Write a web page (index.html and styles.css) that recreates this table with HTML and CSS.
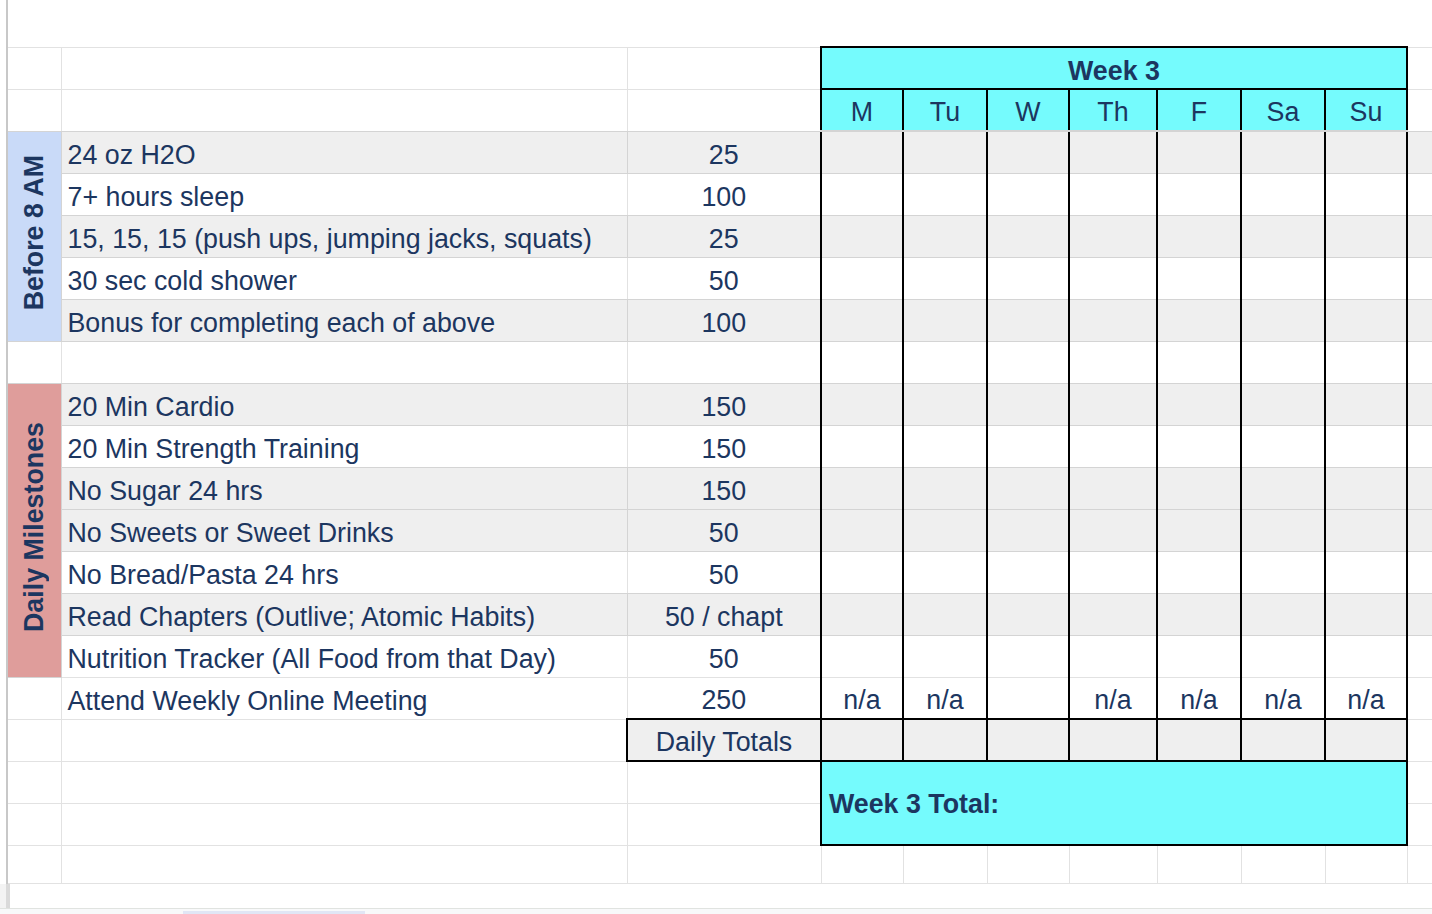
FILE: index.html
```html
<!DOCTYPE html>
<html lang="en">
<head>
<meta charset="utf-8">
<title>Week 3 Tracker</title>
<link rel="stylesheet" href="styles.css">
</head>
<body>
<div class="sheet">
  <div class="top-gap"></div>
  <table class="grid">
    <colgroup>
      <col class="c-a"><col class="c-b"><col class="c-c">
      <col class="c-d"><col class="c-e"><col class="c-f"><col class="c-g"><col class="c-h"><col class="c-i"><col class="c-j">
      <col class="c-k">
    </colgroup>
    <tbody>
      <tr><td></td><td></td><td></td><td class="wk" colspan="7">Week 3</td><td></td></tr>
      <tr><td></td><td></td><td></td>
        <td class="day">M</td><td class="day">Tu</td><td class="day">W</td><td class="day">Th</td><td class="day">F</td><td class="day">Sa</td><td class="day">Su</td><td></td></tr>
      <tr class="band"><td class="lbl lbl-blue" rowspan="5"><span>Before 8 AM</span></td><td class="task">24 oz H2O</td><td class="pts">25</td>
        <td class="wd"></td><td class="wd"></td><td class="wd"></td><td class="wd"></td><td class="wd"></td><td class="wd"></td><td class="wd"></td><td></td></tr>
      <tr><td class="task">7+ hours sleep</td><td class="pts">100</td>
        <td class="wd"></td><td class="wd"></td><td class="wd"></td><td class="wd"></td><td class="wd"></td><td class="wd"></td><td class="wd"></td><td></td></tr>
      <tr class="band"><td class="task">15, 15, 15 (push ups, jumping jacks, squats)</td><td class="pts">25</td>
        <td class="wd"></td><td class="wd"></td><td class="wd"></td><td class="wd"></td><td class="wd"></td><td class="wd"></td><td class="wd"></td><td></td></tr>
      <tr><td class="task">30 sec cold shower</td><td class="pts">50</td>
        <td class="wd"></td><td class="wd"></td><td class="wd"></td><td class="wd"></td><td class="wd"></td><td class="wd"></td><td class="wd"></td><td></td></tr>
      <tr class="band"><td class="task">Bonus for completing each of above</td><td class="pts">100</td>
        <td class="wd"></td><td class="wd"></td><td class="wd"></td><td class="wd"></td><td class="wd"></td><td class="wd"></td><td class="wd"></td><td></td></tr>
      <tr><td></td><td></td><td></td>
        <td class="wd"></td><td class="wd"></td><td class="wd"></td><td class="wd"></td><td class="wd"></td><td class="wd"></td><td class="wd"></td><td></td></tr>
      <tr class="band"><td class="lbl lbl-red" rowspan="7"><span>Daily Milestones</span></td><td class="task">20 Min Cardio</td><td class="pts">150</td>
        <td class="wd"></td><td class="wd"></td><td class="wd"></td><td class="wd"></td><td class="wd"></td><td class="wd"></td><td class="wd"></td><td></td></tr>
      <tr><td class="task">20 Min Strength Training</td><td class="pts">150</td>
        <td class="wd"></td><td class="wd"></td><td class="wd"></td><td class="wd"></td><td class="wd"></td><td class="wd"></td><td class="wd"></td><td></td></tr>
      <tr class="band"><td class="task">No Sugar 24 hrs</td><td class="pts">150</td>
        <td class="wd"></td><td class="wd"></td><td class="wd"></td><td class="wd"></td><td class="wd"></td><td class="wd"></td><td class="wd"></td><td></td></tr>
      <tr class="band"><td class="task">No Sweets or Sweet Drinks</td><td class="pts">50</td>
        <td class="wd"></td><td class="wd"></td><td class="wd"></td><td class="wd"></td><td class="wd"></td><td class="wd"></td><td class="wd"></td><td></td></tr>
      <tr><td class="task">No Bread/Pasta 24 hrs</td><td class="pts">50</td>
        <td class="wd"></td><td class="wd"></td><td class="wd"></td><td class="wd"></td><td class="wd"></td><td class="wd"></td><td class="wd"></td><td></td></tr>
      <tr class="band"><td class="task">Read Chapters (Outlive; Atomic Habits)</td><td class="pts">50 / chapt</td>
        <td class="wd"></td><td class="wd"></td><td class="wd"></td><td class="wd"></td><td class="wd"></td><td class="wd"></td><td class="wd"></td><td></td></tr>
      <tr><td class="task">Nutrition Tracker (All Food from that Day)</td><td class="pts">50</td>
        <td class="wd"></td><td class="wd"></td><td class="wd"></td><td class="wd"></td><td class="wd"></td><td class="wd"></td><td class="wd"></td><td></td></tr>
      <tr><td></td><td class="task">Attend Weekly Online Meeting</td><td class="pts">250</td>
        <td class="wd">n/a</td><td class="wd">n/a</td><td class="wd"></td><td class="wd">n/a</td><td class="wd">n/a</td><td class="wd">n/a</td><td class="wd">n/a</td><td></td></tr>
      <tr><td></td><td></td><td class="tot">Daily Totals</td>
        <td class="tot"></td><td class="tot"></td><td class="tot"></td><td class="tot"></td><td class="tot"></td><td class="tot"></td><td class="tot"></td><td></td></tr>
      <tr><td></td><td></td><td></td><td class="total-box" colspan="7" rowspan="2">Week 3 Total:</td><td></td></tr>
      <tr><td></td><td></td><td></td><td></td></tr>
      <tr class="last"><td></td><td></td><td></td><td></td><td></td><td></td><td></td><td></td><td></td><td></td><td></td></tr>
    </tbody>
  </table>
</div>
<div class="foot"><div class="foot-edge"></div></div>
<div class="hbar"><div class="thumb"></div></div>
</body>
</html>
```
FILE: styles.css
```css
* { box-sizing: border-box; }
html, body {
  margin: 0;
  padding: 0;
  background: #ffffff;
  overflow: hidden;
}
body {
  width: 1432px;
  height: 914px;
  font-family: "Liberation Sans", Arial, sans-serif;
  color: #1c3660;
}
.sheet {
  margin-left: 6px;
  border-left: 2px solid #c8c8c8;
}
.top-gap { height: 46px; }

.grid {
  border-collapse: collapse;
  table-layout: fixed;
  width: 1424px;
  border-left: hidden;
  border-right: hidden;
  font-size: 26.8px;
}
.c-a { width: 53px; }
.c-b { width: 566px; }
.c-c { width: 194px; }
.c-d { width: 82px; }
.c-e { width: 84px; }
.c-f { width: 82px; }
.c-g { width: 88px; }
.c-h { width: 84px; }
.c-i { width: 84px; }
.c-j { width: 82px; }
.c-k { width: 25px; }

.grid tr { height: 42px; }
.grid tr.last { height: 38px; }
.grid td {
  border: 1px solid #e2e2e2;
  padding: 0 6px 3px;
  line-height: 30px;
  vertical-align: bottom;
  white-space: nowrap;
  overflow: hidden;
}
.grid .band > td { background: #efefef; border-color: #d4d4d4; }
.grid tr:has(+ tr.band) > td { border-bottom-color: #d4d4d4; }

.grid td.pts { text-align: center; padding: 0 2px 3px; }
.grid td.wd {
  text-align: center;
  padding: 0 2px 3px;
  border-left: 2px solid #000;
  border-right: 2px solid #000;
}
.grid td.wk {
  background: #75fbfd;
  border: 2px solid #000;
  text-align: center;
  font-weight: bold;
  padding-bottom: 2px;
}
.grid td.day {
  background: #75fbfd;
  border: 2px solid #000;
  text-align: center;
  padding: 0 2px 3px;
}
.grid td.tot {
  background: #efefef;
  border: 2px solid #000;
  text-align: center;
  padding: 0 2px 3px;
}
.grid td.total-box {
  background: #75fbfd;
  border: 2px solid #000;
  font-weight: bold;
  vertical-align: middle;
  padding: 2px 7px 0;
}
.grid td.lbl {
  padding: 0;
  text-align: center;
  vertical-align: middle;
  font-weight: bold;
}
.grid td.lbl-blue { background: #c9daf8; }
.grid td.lbl-red { background: #df9d9b; }
.lbl span {
  display: inline-block;
  writing-mode: vertical-rl;
  transform: rotate(180deg);
  line-height: 30px;
}

.foot {
  height: 24px;
  display: flex;
}
.foot-edge {
  width: 10px;
  background: #f3f3f3;
  border-right: 4px solid #dadada;
}
.hbar {
  height: 7px;
  border-top: 1px solid #e0e3e0;
  background: #f8f9fa;
  padding-top: 2px;
}
.thumb {
  margin-left: 183px;
  width: 182px;
  height: 4px;
  background: #e1e6f5;
}
```
